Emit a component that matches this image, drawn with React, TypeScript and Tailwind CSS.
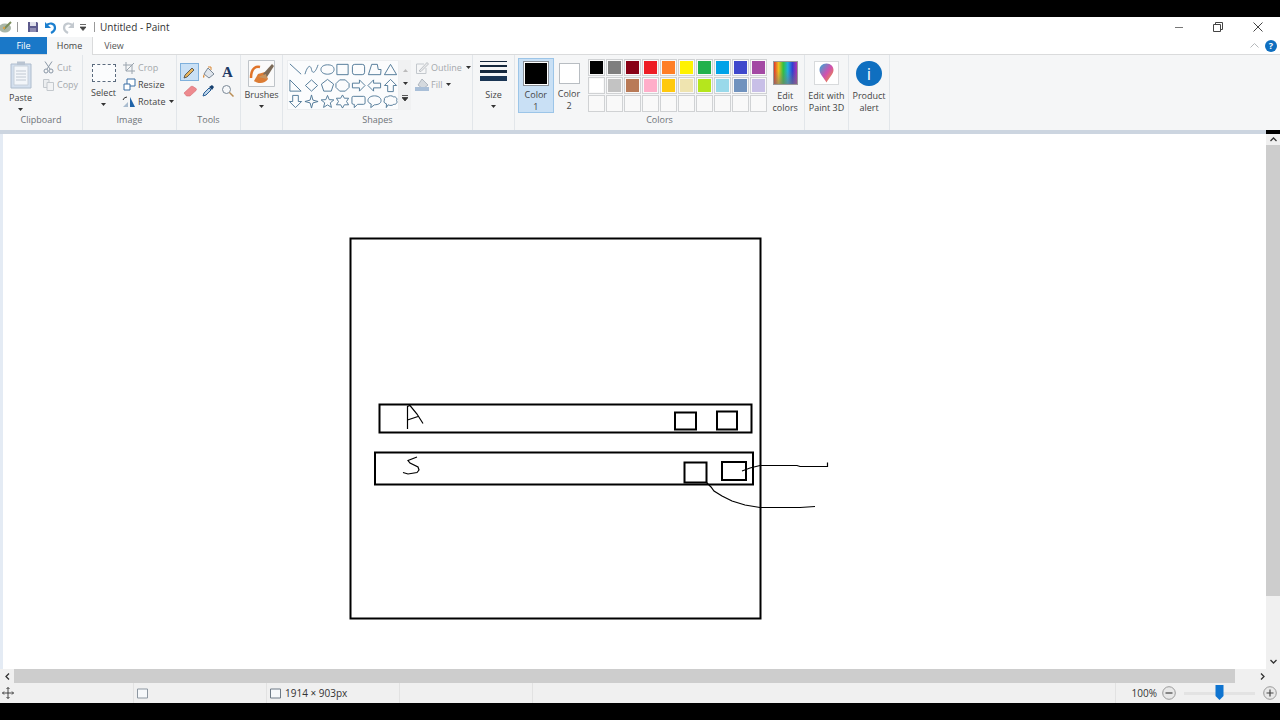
import React from "react";

const font = { fontFamily: '"Open Sans","Noto Sans",sans-serif' };

const row1 = ["#000000","#7f7f7f","#880015","#ed1c24","#ff7f27","#fff200","#22b14c","#00a2e8","#3f48cc","#a349a4"];
const row2 = ["#ffffff","#c3c3c3","#b97a57","#ffaec9","#ffc90e","#efe4b0","#b5e61d","#99d9ea","#7092be","#c8bfe7"];

const shapePaths = [
  "M2 2 L14 13",
  "M1 13 C4 3 7 3 8 8 C9 13 12 12 15 3",
  "M8 3 C13 3 15 5 15 8 C15 11 12 13 8 13 C4 13 1 11 1 8 C1 5 4 3 8 3Z",
  "M2 2.5H14V13.5H2Z",
  "M4 2.5H12Q14.500 2.500 14.500 5V11Q14.500 13.500 12 13.500H4Q1.500 13.500 1.500 11V5Q1.500 2.500 4 2.500Z",
  "M1.500 13.500 L5 2.500 H11 L12 8 H15 L14.500 13.500Z",
  "M8 2.500 L14.500 13.500 H1.500Z",
  "M2 2 V14 H14Z",
  "M8 2 L14.500 8 L8 14 L1.500 8Z",
  "M8 1.500 L14.500 6.500 L12 14 H4 L1.500 6.500Z",
  "M5 2 H11 L15 6 V10 L11 14 H5 L1 10 V6Z",
  "M1.500 5.500 H9 V2 L15 8 L9 14 V10.500 H1.500Z",
  "M14.500 5.500 H7 V2 L1 8 L7 14 V10.500 H14.500Z",
  "M5 14.500 V8 H1.500 L8 1.500 L14.500 8 H11 V14.500Z",
  "M5 1.500 H11 V8 H14.500 L8 14.500 L1.500 8 H5Z",
  "M8 1 L9.500 6.500 L15 8 L9.500 9.500 L8 15 L6.500 9.500 L1 8 L6.500 6.500Z",
  "M8 1.500 L9.800 6 L14.800 6.300 L11 9.400 L12.200 14.300 L8 11.600 L3.800 14.300 L5 9.400 L1.200 6.300 L6.200 6Z",
  "M8 1 L10 4.500 L14.500 4.500 L12.300 8 L14.500 11.500 L10 11.500 L8 15 L6 11.500 L1.500 11.500 L3.700 8 L1.500 4.500 L6 4.500Z",
  "M2.500 2.500 H13.500 Q15 2.500 15 4 V9.500 Q15 11 13.500 11 H7 L3.500 14.500 V11 H2.500 Q1 11 1 9.500 V4 Q1 2.500 2.500 2.500Z",
  "M8 2 C12 2 15 4 15 7 C15 10 12 11.500 8 11.500 L4 14.500 L4.500 10.700 C2.500 10 1 8.800 1 7 C1 4 4 2 8 2Z",
  "M5 3 C6 1.500 10 1.500 11 3 C14 2.500 15.500 5 14.500 7 C15.800 9 14 11.500 11.500 11 C10 12.500 7 12.500 5.500 11.500 L3.500 14.500 L3.700 10.500 C1 10 0.500 7.500 1.500 6.500 C0.800 4 3 2.500 5 3Z",
];

function Group({ w, label, children }: { w: string; label: string; children?: React.ReactNode }) {
  return (
    <div className={`${w} h-full shrink-0 flex flex-col border-r border-[#e2e6ea]`}>
      <div className="flex-1 min-h-0 flex">{children}</div>
      <div className="h-[17px] text-center text-[9px] leading-[13px] text-[#6e7378]">{label}</div>
    </div>
  );
}

function Caret({ className = "" }: { className?: string }) {
  return (
    <svg width="5" height="3" viewBox="0 0 5 3" className={className}>
      <path d="M0 0H5L2.500 3Z" fill="#333" />
    </svg>
  );
}

function SmallRow({ icon, text, caret, muted }: { icon: React.ReactNode; text: string; caret?: boolean; muted?: boolean }) {
  return (
    <div className={`h-[17px] flex items-center gap-[2px] text-[9px] ${muted ? "text-[#a4a8ac]" : "text-[#444]"}`}>
      <span className="w-[14px] h-[14px] flex items-center justify-center">{icon}</span>
      <span>{text}</span>
      {caret && <Caret className="ml-[2px]" />}
    </div>
  );
}

function BigLabel({ lines, caret }: { lines: string[]; caret?: boolean }) {
  return (
    <div className="text-[9px] leading-[11.500px] text-center text-[#444] flex flex-col items-center">
      {lines.map((l) => (
        <span key={l}>{l}</span>
      ))}
      {caret && <Caret className="mt-[4px]" />}
    </div>
  );
}

function Swatch({ c }: { c?: string }) {
  return (
    <div className="w-[17px] h-[17px] border border-[#d0d2d4] p-[1px] bg-[#f9f9f9]">
      <div className="w-full h-full" style={{ background: c ?? "transparent" }} />
    </div>
  );
}

export default function App() {
  return (
    <div className="w-[1280px] h-[720px] bg-black flex flex-col overflow-hidden" style={font}>
      <div className="h-[17px] shrink-0 bg-black" />

      {/* Title bar */}
      <div className="h-[20px] shrink-0 bg-white flex items-center">
        <svg width="14" height="14" viewBox="0 0 14 14" className="ml-[0px]">
          <ellipse cx="5" cy="8" rx="6" ry="4.500" fill="#a9b6a8" />
          <path d="M4 9 L11 2" stroke="#7a8c5a" strokeWidth="2" />
          <circle cx="4" cy="8" r="1.200" fill="#d8a24a" />
        </svg>
        <div className="w-px h-[10px] bg-[#999] ml-[3px]" />
        <svg width="12" height="12" viewBox="0 0 12 12" className="ml-[9px]">
          <path d="M1 1H10L11 2V11H1Z" fill="#5c5a8c" />
          <path d="M3 1H9V5H3Z" fill="#dfe0ea" />
          <path d="M3 7H9V11H3Z" fill="#8d8bb0" />
        </svg>
        <svg width="13" height="13" viewBox="0 0 13 13" className="ml-[5px]">
          <path d="M2 5 C5 1 11 2 11 7 C11 9 9 11 7 12" fill="none" stroke="#1b7fcf" strokeWidth="2.200" />
          <path d="M1 1V7H7Z" fill="#1b7fcf" />
        </svg>
        <svg width="13" height="13" viewBox="0 0 13 13" className="ml-[5px]">
          <path d="M11 5 C8 1 2 2 2 7 C2 9 4 11 6 12" fill="none" stroke="#c3c9cf" strokeWidth="2.200" />
          <path d="M12 1V7H6Z" fill="#c3c9cf" />
        </svg>
        <svg width="6" height="7" viewBox="0 0 6 7" className="ml-[5px]">
          <path d="M0 0.500H6M0 3H6L3 6.500Z" stroke="#444" strokeWidth="0.800" fill="#444" />
        </svg>
        <div className="w-px h-[10px] bg-[#999] ml-[8px]" />
        <span className="ml-[5px] text-[10px] text-[#333] leading-none">Untitled - Paint</span>
        <div className="ml-auto flex items-center">
          <div className="w-[8px] h-px bg-[#777]" />
          <svg width="10" height="10" viewBox="0 0 10 10" className="ml-[30px]">
            <path d="M0.500 2.500H7.500V9.500H0.500Z M2.500 2.500V0.500H9.500V7.500H7.500" fill="none" stroke="#444" />
          </svg>
          <svg width="10" height="10" viewBox="0 0 10 10" className="ml-[30px] mr-[17px]">
            <path d="M0.500 0.500L9.500 9.500M9.500 0.500L0.500 9.500" stroke="#444" />
          </svg>
        </div>
      </div>

      {/* Tabs */}
      <div className="h-[18px] shrink-0 bg-white flex items-stretch text-[9px] border-b border-[#dadbdc]">
        <div className="w-[47px] bg-[#1a78c8] text-white flex items-center justify-center">File</div>
        <div className="w-[46px] h-[18px] bg-[#f5f6f7] text-[#444] flex items-center justify-center border-r border-[#dadbdc]">Home</div>
        <div className="w-[42px] text-[#555] flex items-center justify-center">View</div>
        <div className="ml-auto flex items-center">
          <svg width="9" height="5" viewBox="0 0 9 5">
            <path d="M0.500 4.500L4.500 0.500L8.500 4.500" fill="none" stroke="#b5b8bb" />
          </svg>
          <div className="w-[12px] h-[12px] rounded-full bg-[#0f6fc0] text-white text-[9px] font-bold leading-[12px] text-center ml-[6px] mr-[3px]">?</div>
        </div>
      </div>

      {/* Ribbon */}
      <div className="h-[75px] shrink-0 bg-[#f5f6f7] flex">
        <Group w="w-[83px]" label="Clipboard">
          <div className="w-[41px] flex flex-col items-center pt-[6px]">
            <svg width="22" height="28" viewBox="0 0 22 28">
              <path d="M1 3H21V27H1Z" fill="#d3dfee" stroke="#aebccd" />
              <path d="M4 5H18V24H4Z" fill="#f3f6fa" stroke="#c7d0da" />
              <path d="M6 10H16M6 13H16M6 16H16M6 19H16" stroke="#c0c8d2" />
              <path d="M7 0.500H15V4H7Z" fill="#b9c4d2" />
            </svg>
            <div className="mt-[3px]">
              <BigLabel lines={["Paste"]} caret />
            </div>
          </div>
          <div className="flex flex-col pt-[4px]">
            <SmallRow
              muted
              text="Cut"
              icon={
                <svg width="11" height="13" viewBox="0 0 11 13">
                  <path d="M2 0.500L7 8M9 0.500L4 8" stroke="#8a97a6" fill="none" />
                  <circle cx="3" cy="10" r="2" fill="none" stroke="#8a97a6" />
                  <circle cx="8" cy="10" r="2" fill="none" stroke="#8a97a6" />
                </svg>
              }
            />
            <SmallRow
              muted
              text="Copy"
              icon={
                <svg width="11" height="12" viewBox="0 0 11 12">
                  <path d="M0.500 0.500H6V8.500H0.500Z" fill="#eceef0" stroke="#c3c8cd" />
                  <path d="M4 3.500H10.500V11.500H4Z" fill="#f2f3f4" stroke="#c3c8cd" />
                </svg>
              }
            />
          </div>
        </Group>

        <Group w="w-[94px]" label="Image">
          <div className="w-[37px] ml-[2px] flex flex-col items-center pt-[9px]">
            <div className="w-[24px] h-[18px] border border-dashed border-[#5b6b7e] bg-[#fbfcfd]" />
            <div className="mt-[5px]">
              <BigLabel lines={["Select"]} caret />
            </div>
          </div>
          <div className="flex flex-col pt-[4px]">
            <SmallRow
              muted
              text="Crop"
              icon={
                <svg width="12" height="12" viewBox="0 0 12 12">
                  <path d="M3 0V9H12M0 3H9V12M11 1L3 9" fill="none" stroke="#9aa4ae" />
                </svg>
              }
            />
            <SmallRow
              text="Resize"
              icon={
                <svg width="13" height="13" viewBox="0 0 13 13">
                  <path d="M4 1H12V8H4Z" fill="#fff" stroke="#3a6ea5" />
                  <path d="M1 6H7V12H1Z" fill="#fff" stroke="#3a6ea5" />
                </svg>
              }
            />
            <SmallRow
              caret
              text="Rotate"
              icon={
                <svg width="14" height="13" viewBox="0 0 14 13">
                  <path d="M8 2L13 12H8Z" fill="#1f63a8" />
                  <path d="M1 12L6 7V12Z" fill="#a9bccf" />
                  <path d="M1 5Q2 2 5 2" fill="none" stroke="#333" />
                </svg>
              }
            />
          </div>
        </Group>

        <Group w="w-[64px]" label="Tools">
          <div className="grid grid-cols-3 grid-rows-2 gap-x-0 w-[57px] h-[37px] ml-[3px] mt-[8px]">
            <div className="w-[19px] h-[18px] bg-[#c9e0f5] border border-[#7fb0dc] flex items-center justify-center">
              <svg width="13" height="13" viewBox="0 0 13 13">
                <path d="M1 12L2 9L9 2L11 4L4 11Z" fill="#e7b45c" stroke="#444" strokeWidth="0.800" />
              </svg>
            </div>
            <div className="flex items-center justify-center">
              <svg width="13" height="13" viewBox="0 0 13 13">
                <path d="M6 2L12 8L7 12L2 8Z" fill="#dfe5ec" stroke="#7a8896" />
                <path d="M2 8Q0 11 2 12Q3 10 2 8Z" fill="#d88735" />
                <path d="M6 1H9V4" stroke="#d88735" fill="none" />
              </svg>
            </div>
            <div className="flex items-center justify-center font-bold text-[15px] leading-none text-[#1d3a66]" style={{ fontFamily: '"Liberation Serif",serif' }}>
              A
            </div>
            <div className="flex items-center justify-center">
              <svg width="14" height="12" viewBox="0 0 14 12">
                <path d="M1 8L8 1.500Q9 1 10 1.500L13 3.500Q14 4.500 13 5.500L7 11H3.500Z" fill="#ed8a8f" stroke="#d76a70" strokeWidth="0.600" />
              </svg>
            </div>
            <div className="flex items-center justify-center">
              <svg width="13" height="13" viewBox="0 0 13 13">
                <path d="M1 12L2 9L7 4L9 6L4 11Z" fill="#bcd4ea" stroke="#2a5f96" />
                <path d="M7 3L10 1L12 3L10 6Z" fill="#16406f" />
              </svg>
            </div>
            <div className="flex items-center justify-center">
              <svg width="13" height="13" viewBox="0 0 13 13">
                <circle cx="5.500" cy="5.500" r="4" fill="#f6f8fa" stroke="#7a8896" />
                <path d="M8.500 8.500L12.500 12.500" stroke="#b98d55" strokeWidth="1.500" />
              </svg>
            </div>
          </div>
        </Group>

        <Group w="w-[42px]" label="">
          <div className="w-full flex flex-col items-center pt-[5px]">
            <svg width="27" height="27" viewBox="0 0 27 27">
              <path d="M0.500 0.500H26.500V26.500H0.500Z" fill="#fafafa" stroke="#bfc4c9" />
              <path d="M3 18C3 8 8 6 12 7" fill="none" stroke="#e0742a" strokeWidth="2.500" />
              <path d="M6 21C10 24 17 24 20 19L17 12L10 14Z" fill="#dc7c34" />
              <path d="M15 14L24 4L26 6L19 17Z" fill="#7b6a58" />
              <path d="M10 17L18 14L19 19Z" fill="#c5945f" />
            </svg>
            <div className="mt-[2px]">
              <BigLabel lines={["Brushes"]} caret />
            </div>
          </div>
        </Group>

        <Group w="w-[190px]" label="Shapes">
          <div className="flex ml-[4px] mt-[5px] h-[50px]">
            <div className="w-[112px] h-[50px] bg-[#fbfcfd] border border-[#eceef0] grid grid-cols-7 grid-rows-3 place-items-center">
              {shapePaths.map((d, i) => (
                <svg key={i} width="15" height="15" viewBox="0 0 16 16">
                  <path d={d} fill="none" stroke="#4f7896" strokeWidth="1" />
                </svg>
              ))}
            </div>
            <div className="w-[12px] h-[50px] bg-[#f0f1f2] flex flex-col items-center justify-around py-[4px]">
              <svg width="5" height="3" viewBox="0 0 5 3"><path d="M0 3H5L2.500 0Z" fill="#bbb" /></svg>
              <Caret />
              <svg width="6" height="6" viewBox="0 0 6 6"><path d="M0 0.500H6M0 2.500H6L3 6Z" stroke="#333" strokeWidth="0.800" fill="#333" /></svg>
            </div>
          </div>
          <div className="flex flex-col ml-[4px] pt-[4px]">
            <SmallRow
              muted
              caret
              text="Outline"
              icon={
                <svg width="13" height="13" viewBox="0 0 13 13">
                  <path d="M0.500 3H8M0.500 3V12.500H10V7" fill="none" stroke="#c3c8cd" />
                  <path d="M3 10L11 1.500L12.500 3L5 10.500Z" fill="#e8eaec" stroke="#a9aeb3" strokeWidth="0.700" />
                </svg>
              }
            />
            <SmallRow
              muted
              caret
              text="Fill"
              icon={
                <svg width="14" height="13" viewBox="0 0 14 13">
                  <path d="M7 1L13 7L8 11L3 7Z" fill="#d4d9de" stroke="#9ba4ad" strokeWidth="0.700" />
                  <path d="M0 9H14V13H0Z" fill="#a9bfd8" />
                </svg>
              }
            />
          </div>
        </Group>

        <Group w="w-[42px]" label="">
          <div className="w-full flex flex-col items-center pt-[6px]">
            <div className="w-[27px] flex flex-col gap-[3px]">
              <div className="h-px bg-[#16283d]" />
              <div className="h-[2px] bg-[#16283d]" />
              <div className="h-[3px] bg-[#16283d]" />
              <div className="h-[5px] bg-[#1a3554]" />
            </div>
            <div className="mt-[8px]">
              <BigLabel lines={["Size"]} caret />
            </div>
          </div>
        </Group>

        <Group w="w-[290px]" label="Colors">
          <div className="w-[36px] h-[55px] ml-[3px] mt-[3px] bg-[#c9e0f5] border border-[#9cc5e8] flex flex-col items-center pt-[2px]">
            <div className="w-[26px] h-[26px] border border-[#8a9097] p-[1px] bg-white">
              <div className="w-full h-full bg-black" />
            </div>
            <div className="mt-[3px]">
              <BigLabel lines={["Color", "1"]} />
            </div>
          </div>
          <div className="w-[31px] flex flex-col items-center pt-[8px]">
            <div className="w-[21px] h-[21px] border border-[#b8bdc2] bg-white" />
            <div className="mt-[4px]">
              <BigLabel lines={["Color", "2"]} />
            </div>
          </div>
          <div className="grid grid-cols-10 gap-x-[1.100px] gap-y-px mt-[4px] ml-[4px] h-[53px]">
            {row1.map((c) => <Swatch key={c} c={c} />)}
            {row2.map((c) => <Swatch key={c} c={c} />)}
            {row1.map((c) => <Swatch key={"e" + c} />)}
          </div>
          <div className="w-[38px] flex flex-col items-center pt-[6px]">
            <div
              className="w-[25px] h-[25px] border border-[#9a9a9a]"
              style={{ background: "linear-gradient(to bottom, rgba(255,255,255,0) 40%, rgba(120,120,120,.6) 100%), linear-gradient(to right, #e0342c, #f0c020, #30c040, #20b0e0, #3040d0, #b030b0)" }}
            />
            <div className="mt-[5px]">
              <BigLabel lines={["Edit", "colors"]} />
            </div>
          </div>
        </Group>

        <Group w="w-[44px]" label="">
          <div className="w-full flex flex-col items-center pt-[6px]">
            <div className="w-[25px] h-[25px] bg-white border border-[#d8dadc] flex items-center justify-center">
              <svg width="15" height="20" viewBox="0 0 15 20">
                <defs>
                  <linearGradient id="p3d" x1="0" y1="0" x2="1" y2="1">
                    <stop offset="0" stopColor="#28b0d8" />
                    <stop offset="0.500" stopColor="#d050b0" />
                    <stop offset="1" stopColor="#f4a020" />
                  </linearGradient>
                </defs>
                <path d="M7.500 0.500C12 0.500 14.500 3.500 14.500 7C14.500 11 10 15 7.500 19.500C5 15 0.500 11 0.500 7C0.500 3.500 3 0.500 7.500 0.500Z" fill="url(#p3d)" />
              </svg>
            </div>
            <div className="mt-[5px]">
              <BigLabel lines={["Edit with", "Paint 3D"]} />
            </div>
          </div>
        </Group>

        <Group w="w-[41px]" label="">
          <div className="w-full flex flex-col items-center pt-[6px]">
            <div className="w-[26px] h-[26px] rounded-full bg-[#0f6fc0] text-white flex items-center justify-center text-[17px] leading-none">i</div>
            <div className="mt-[4px]">
              <BigLabel lines={["Product", "alert"]} />
            </div>
          </div>
        </Group>
      </div>

      <div className="h-[4px] shrink-0 bg-[#ccd5e0] mr-[14px]" />

      {/* Canvas + vertical scrollbar */}
      <div className="h-[535px] shrink-0 flex bg-white">
        <div className="w-[3px] h-full bg-[#e4ebf4]" />
        <svg width="1263" height="535" viewBox="3 134 1263 535" className="block shrink-0">
          <g fill="none" stroke="#000" strokeWidth="2">
            <rect x="350.500" y="238.500" width="410" height="380" />
            <rect x="379.500" y="404.500" width="372" height="28" />
            <rect x="375" y="452.500" width="378" height="32" />
            <rect x="675" y="412.500" width="21" height="17" />
            <rect x="717" y="411.500" width="20" height="18" />
            <rect x="684.500" y="462.500" width="22" height="20" />
            <rect x="722" y="462" width="24" height="18" />
          </g>
          <g fill="none" stroke="#000" strokeWidth="1.200">
            <path d="M407.500 429 V406.500 L410 405.500 L417 414 L423 423.500 M407.500 420 L418 416.500" />
            <path d="M417 457 L408 460.500 L410 463 L418 467 L419 470 L417 472.500 L408 474 L403 472.500" />
            <path d="M742 471 L750 468 L760 465.500 H797 L800 466.500 H827.500 V462.500" />
            <path d="M706 482 L711 487 L714 491 L722 496 L732 501 L745 505 L760 507.500 H800 L815 506.500" />
          </g>
        </svg>
        <div className="w-[14px] h-full bg-[#f0f0f0] flex flex-col items-center">
          <div className="h-[11px] flex items-center">
            <svg width="7" height="5" viewBox="0 0 7 5"><path d="M0.500 4L3.500 1L6.500 4" fill="none" stroke="#333" strokeWidth="1.300" /></svg>
          </div>
          <div className="w-full h-[451px] bg-[#cdcdcd]" />
          <div className="mt-auto h-[16px] flex items-center">
            <svg width="7" height="5" viewBox="0 0 7 5"><path d="M0.500 1L3.500 4L6.500 1" fill="none" stroke="#333" strokeWidth="1.300" /></svg>
          </div>
        </div>
      </div>

      {/* Horizontal scrollbar */}
      <div className="h-[14px] shrink-0 bg-[#f0f0f0] flex items-center">
        <div className="w-[14px] flex justify-center">
          <svg width="5" height="7" viewBox="0 0 5 7"><path d="M4 0.500L1 3.500L4 6.500" fill="none" stroke="#333" strokeWidth="1.300" /></svg>
        </div>
        <div className="w-[1221px] h-full bg-[#cdcdcd]" />
        <div className="flex-1 flex justify-center pl-[10px]">
          <svg width="5" height="7" viewBox="0 0 5 7"><path d="M1 0.500L4 3.500L1 6.500" fill="none" stroke="#333" strokeWidth="1.300" /></svg>
        </div>
      </div>

      {/* Status bar */}
      <div className="h-[20px] shrink-0 bg-[#f0f0f0] flex items-stretch text-[10px] text-[#333]">
        <div className="w-[134px] flex items-center border-r border-[#e2e2e2] pl-[2px]">
          <svg width="12" height="12" viewBox="0 0 12 12">
            <path d="M6 0.500V11.500M0.500 6H11.500M4.500 2L6 0.500L7.500 2M4.500 10L6 11.500L7.500 10M2 4.500L0.500 6L2 7.500M10 4.500L11.500 6L10 7.500" fill="none" stroke="#333" strokeWidth="0.900" />
          </svg>
        </div>
        <div className="w-[133px] flex items-center border-r border-[#e2e2e2] pl-[2px]">
          <svg width="13" height="13" viewBox="0 0 13 13">
            <path d="M1.500 2H11.500V11H1.500Z" fill="#f6f8fa" stroke="#8d97a1" />
          </svg>
        </div>
        <div className="w-[133px] flex items-center border-r border-[#e2e2e2] pl-[2px] gap-[3px]">
          <svg width="13" height="13" viewBox="0 0 13 13">
            <path d="M1.500 2H11.500V11H1.500Z" fill="#f6f8fa" stroke="#6f7b87" />
          </svg>
          <span>1914 × 903px</span>
        </div>
        <div className="w-[133px] border-r border-[#e2e2e2]" />
        <div className="w-[583px] border-r border-[#e2e2e2]" />
        <div className="flex-1 flex items-center justify-end pr-[3px]">
          <span>100%</span>
          <svg width="14" height="14" viewBox="0 0 14 14" className="ml-[5px]">
            <circle cx="7" cy="7" r="6.300" fill="#e8e8e8" stroke="#9a9a9a" />
            <path d="M3.500 7H10.500" stroke="#444" strokeWidth="1.200" />
          </svg>
          <div className="ml-[8px] w-[71px] h-[14px] flex items-center relative">
            <div className="w-full h-[3px] bg-[#e3e3e3]" />
            <svg width="9" height="16" viewBox="0 0 9 16" className="absolute left-[31px] top-[-1px]">
              <path d="M0.500 0H8.500V11L4.500 15L0.500 11Z" fill="#0f74d0" />
            </svg>
          </div>
          <svg width="14" height="14" viewBox="0 0 14 14" className="ml-[8px]">
            <circle cx="7" cy="7" r="6.300" fill="#e8e8e8" stroke="#9a9a9a" />
            <path d="M3.500 7H10.500M7 3.500V10.500" stroke="#444" strokeWidth="1.200" />
          </svg>
        </div>
      </div>

      <div className="flex-1 bg-black" />
    </div>
  );
}
